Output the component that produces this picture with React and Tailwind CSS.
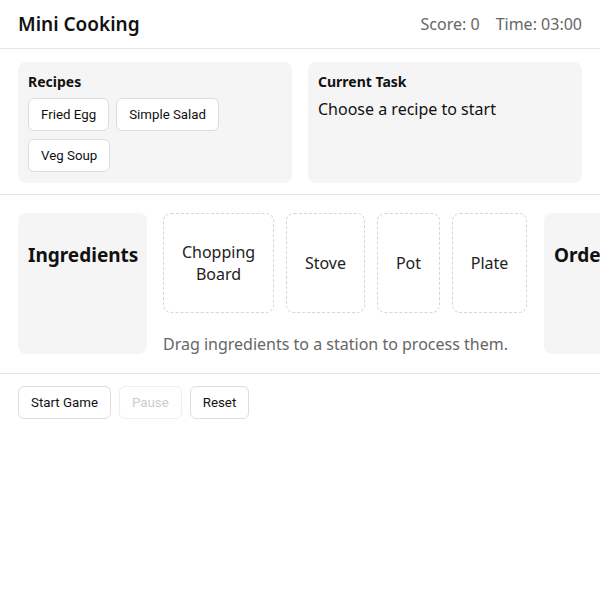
// Mini Cooking — static game board layout

const recipes = ['Fried Egg', 'Simple Salad', 'Veg Soup'];

const stations = [
  { name: 'Chopping Board', w: 'w-[111px]' },
  { name: 'Stove', w: 'w-[79px]' },
  { name: 'Pot', w: 'w-[63px]' },
  { name: 'Plate', w: 'w-[75px]' },
];

function Btn({ children, disabled }) {
  return (
    <button
      type="button"
      disabled={disabled}
      className={
        'rounded-md border bg-white px-[12px] py-[7px] text-[13.3px] leading-[17px] font-["Roboto",sans-serif] ' +
        (disabled ? 'border-[#eeeeee] text-[#cccccc]' : 'border-[#dddddd] text-[#111]')
      }
    >
      {children}
    </button>
  );
}

export default function App() {
  return (
    <div className="min-h-[600px] w-[600px] overflow-hidden bg-white font-['Noto_Sans',sans-serif] text-[#111]">
      <header className="flex h-[49px] items-center justify-between border-b border-[#e5e5e5] px-[18px]">
        <h1 className="text-[19px] font-semibold">Mini Cooking</h1>
        <div className="flex gap-[16px] text-[16px] text-[#666]">
          <span>Score: 0</span>
          <span>Time: 03:00</span>
        </div>
      </header>

      <section className="grid grid-cols-2 gap-[16px] border-b border-[#e5e5e5] px-[18px] pt-[13px] pb-[11px]">
        <div className="rounded-lg bg-[#f5f5f5] px-[10px] pt-[10px] pb-[11px]">
          <h2 className="text-[14px] leading-[19px] font-bold">Recipes</h2>
          <div className="mt-[7px] flex flex-wrap gap-x-[7px] gap-y-[8px]">
            {recipes.map((r) => (
              <Btn key={r}>{r}</Btn>
            ))}
          </div>
        </div>
        <div className="rounded-lg bg-[#f5f5f5] px-[10px] pt-[10px]">
          <h2 className="text-[14px] leading-[19px] font-bold">Current Task</h2>
          <p className="mt-[7px] text-[16px] leading-[22px]">Choose a recipe to start</p>
        </div>
      </section>

      <section className="flex gap-[17px] overflow-hidden border-b border-[#e5e5e5] px-[18px] pt-[18px] pb-[18px]">
        <div className="h-[141px] w-[129px] shrink-0 rounded-lg bg-[#f5f5f5] px-[10px] pt-[29px]">
          <h2 className="text-[19px] leading-[26px] font-bold">Ingredients</h2>
        </div>
        <div className="-ml-px w-[364px] shrink-0">
          <div className="flex gap-[12px]">
            {stations.map((s) => (
              <div
                key={s.name}
                className={
                  'flex h-[100px] items-center justify-center rounded-lg border border-dashed border-[#d6d6d6] px-[16px] text-center text-[16px] leading-[22px] text-[#222] ' +
                  s.w
                }
              >
                {s.name}
              </div>
            ))}
          </div>
          <p className="mt-[20px] text-[16px] leading-[22px] whitespace-nowrap text-[#666]">
            Drag ingredients to a station to process them.
          </p>
        </div>
        <div className="h-[141px] w-[129px] shrink-0 rounded-lg bg-[#f5f5f5] px-[10px] pt-[29px]">
          <h2 className="text-[19px] leading-[26px] font-bold">Orders</h2>
        </div>
      </section>

      <div className="flex gap-[8px] px-[18px] pt-[12px]">
        <Btn>Start Game</Btn>
        <Btn disabled>Pause</Btn>
        <Btn>Reset</Btn>
      </div>
    </div>
  );
}
